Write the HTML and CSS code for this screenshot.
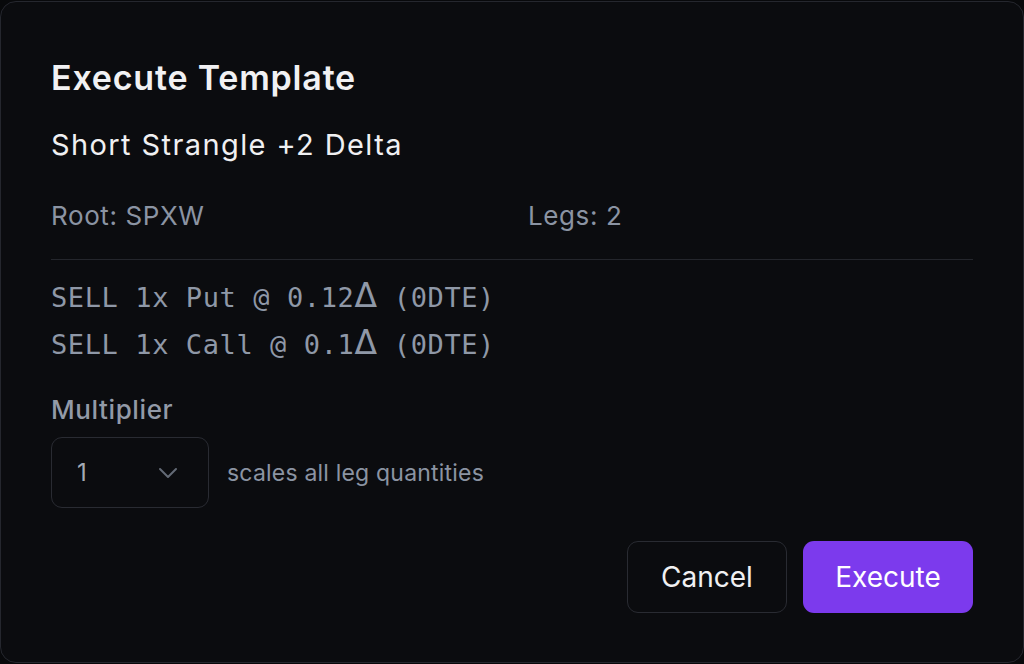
FILE: index.html
```html
<!DOCTYPE html>
<html lang="en">

<head>
    <meta charset="UTF-8">
    <title>Execute Template</title>
    <link rel="stylesheet" href="styles.css">
</head>

<body>

    <div class="dialog" role="dialog" aria-labelledby="dialogTitle">
        <h2 class="dialog-title" id="dialogTitle">Execute Template</h2>
        <div class="template-name">Short Strangle +2 Delta</div>

        <div class="meta">
            <div>Root: SPXW</div>
            <div>Legs: 2</div>
        </div>

        <div class="legs">
            <div class="leg">SELL 1x Put @ 0.12<span class="delta">&Delta;</span> (0DTE)</div>
            <div class="leg">SELL 1x Call @ 0.1<span class="delta">&Delta;</span> (0DTE)</div>
        </div>

        <label class="field-label" for="multiplier">Multiplier</label>
        <div class="field-row">
            <div class="select">
                <select id="multiplier">
                    <option>1</option>
                    <option>2</option>
                    <option>3</option>
                    <option>5</option>
                    <option>10</option>
                </select>
                <svg class="chevron" width="20" height="12" viewBox="0 0 20 12" fill="none">
                    <path d="M2 2l8 8 8-8" stroke="currentColor" stroke-width="2" stroke-linecap="round" stroke-linejoin="round" />
                </svg>
            </div>
            <span class="hint">scales all leg quantities</span>
        </div>

        <div class="actions">
            <button class="btn btn-cancel">Cancel</button>
            <button class="btn btn-primary">Execute</button>
        </div>
    </div>

</body>

</html>
```

FILE: styles.css
```css
body {
    margin: 0;
    background: #08090b;
    font-family: Inter, "Noto Sans", sans-serif;
    color: #f0f0f2;
}

.dialog {
    box-sizing: border-box;
    height: 662px;
    margin-top: 1px;
    padding: 56px 50px 0;
    background: #0b0c0f;
    border: 1px solid #25272e;
    border-radius: 16px;
    display: flex;
    flex-direction: column;
}

.dialog-title {
    margin: 0;
    font-size: 34px;
    line-height: 40px;
    font-weight: 600;
    letter-spacing: 0.8px;
    color: #f1f1f3;
}

.template-name {
    margin-top: 29px;
    font-size: 29px;
    line-height: 36px;
    letter-spacing: 1.4px;
    color: #f0f0f2;
}

.meta {
    margin-top: 38px;
    display: grid;
    grid-template-columns: 1fr 1fr;
    gap: 32px;
    font-size: 26px;
    line-height: 30px;
    letter-spacing: 0.6px;
    color: #8b94a3;
    padding-bottom: 28px;
    border-bottom: 1px solid #24262c;
}

.legs {
    margin-top: 14px;
    font-family: "DejaVu Sans Mono", "Liberation Mono", monospace;
    font-size: 27px;
    letter-spacing: 0.6px;
    line-height: 47px;
    color: #8f98a7;
}

.delta {
    font-family: "DejaVu Sans", sans-serif;
    font-size: 33px;
    line-height: 1;
    letter-spacing: 0;
}

.field-label {
    margin-top: 27px;
    font-size: 26px;
    line-height: 30px;
    font-weight: 500;
    letter-spacing: 0.6px;
    color: #929aa7;
}

.field-row {
    margin-top: 12px;
    display: flex;
    align-items: center;
    gap: 18px;
}

.select {
    position: relative;
    width: 158px;
    height: 71px;
}

.select select {
    appearance: none;
    box-sizing: border-box;
    width: 100%;
    height: 100%;
    padding: 0 0 0 25px;
    background: #0b0c0f;
    border: 1px solid #292b32;
    border-radius: 11px;
    font-family: Inter, sans-serif;
    font-size: 24px;
    color: #a3aab5;
    outline: none;
}

.chevron {
    position: absolute;
    right: 31px;
    top: 30px;
    color: #646b76;
    pointer-events: none;
}

.hint {
    font-size: 23px;
    letter-spacing: 0.2px;
    color: #8b94a3;
}

.actions {
    margin-top: 33px;
    display: flex;
    justify-content: flex-end;
    gap: 16px;
}

.btn {
    height: 72px;
    padding: 0;
    border-radius: 11px;
    font-family: Inter, sans-serif;
    font-size: 28px;
    cursor: pointer;
}

.btn-cancel {
    width: 160px;
    background: #0b0c0f;
    border: 1px solid #292b32;
    color: #f0f0f2;
}

.btn-primary {
    width: 170px;
    background: #7c3aed;
    border: none;
    color: #ffffff;
}

.btn-primary:hover {
    background: #6d28d9;
}
```
